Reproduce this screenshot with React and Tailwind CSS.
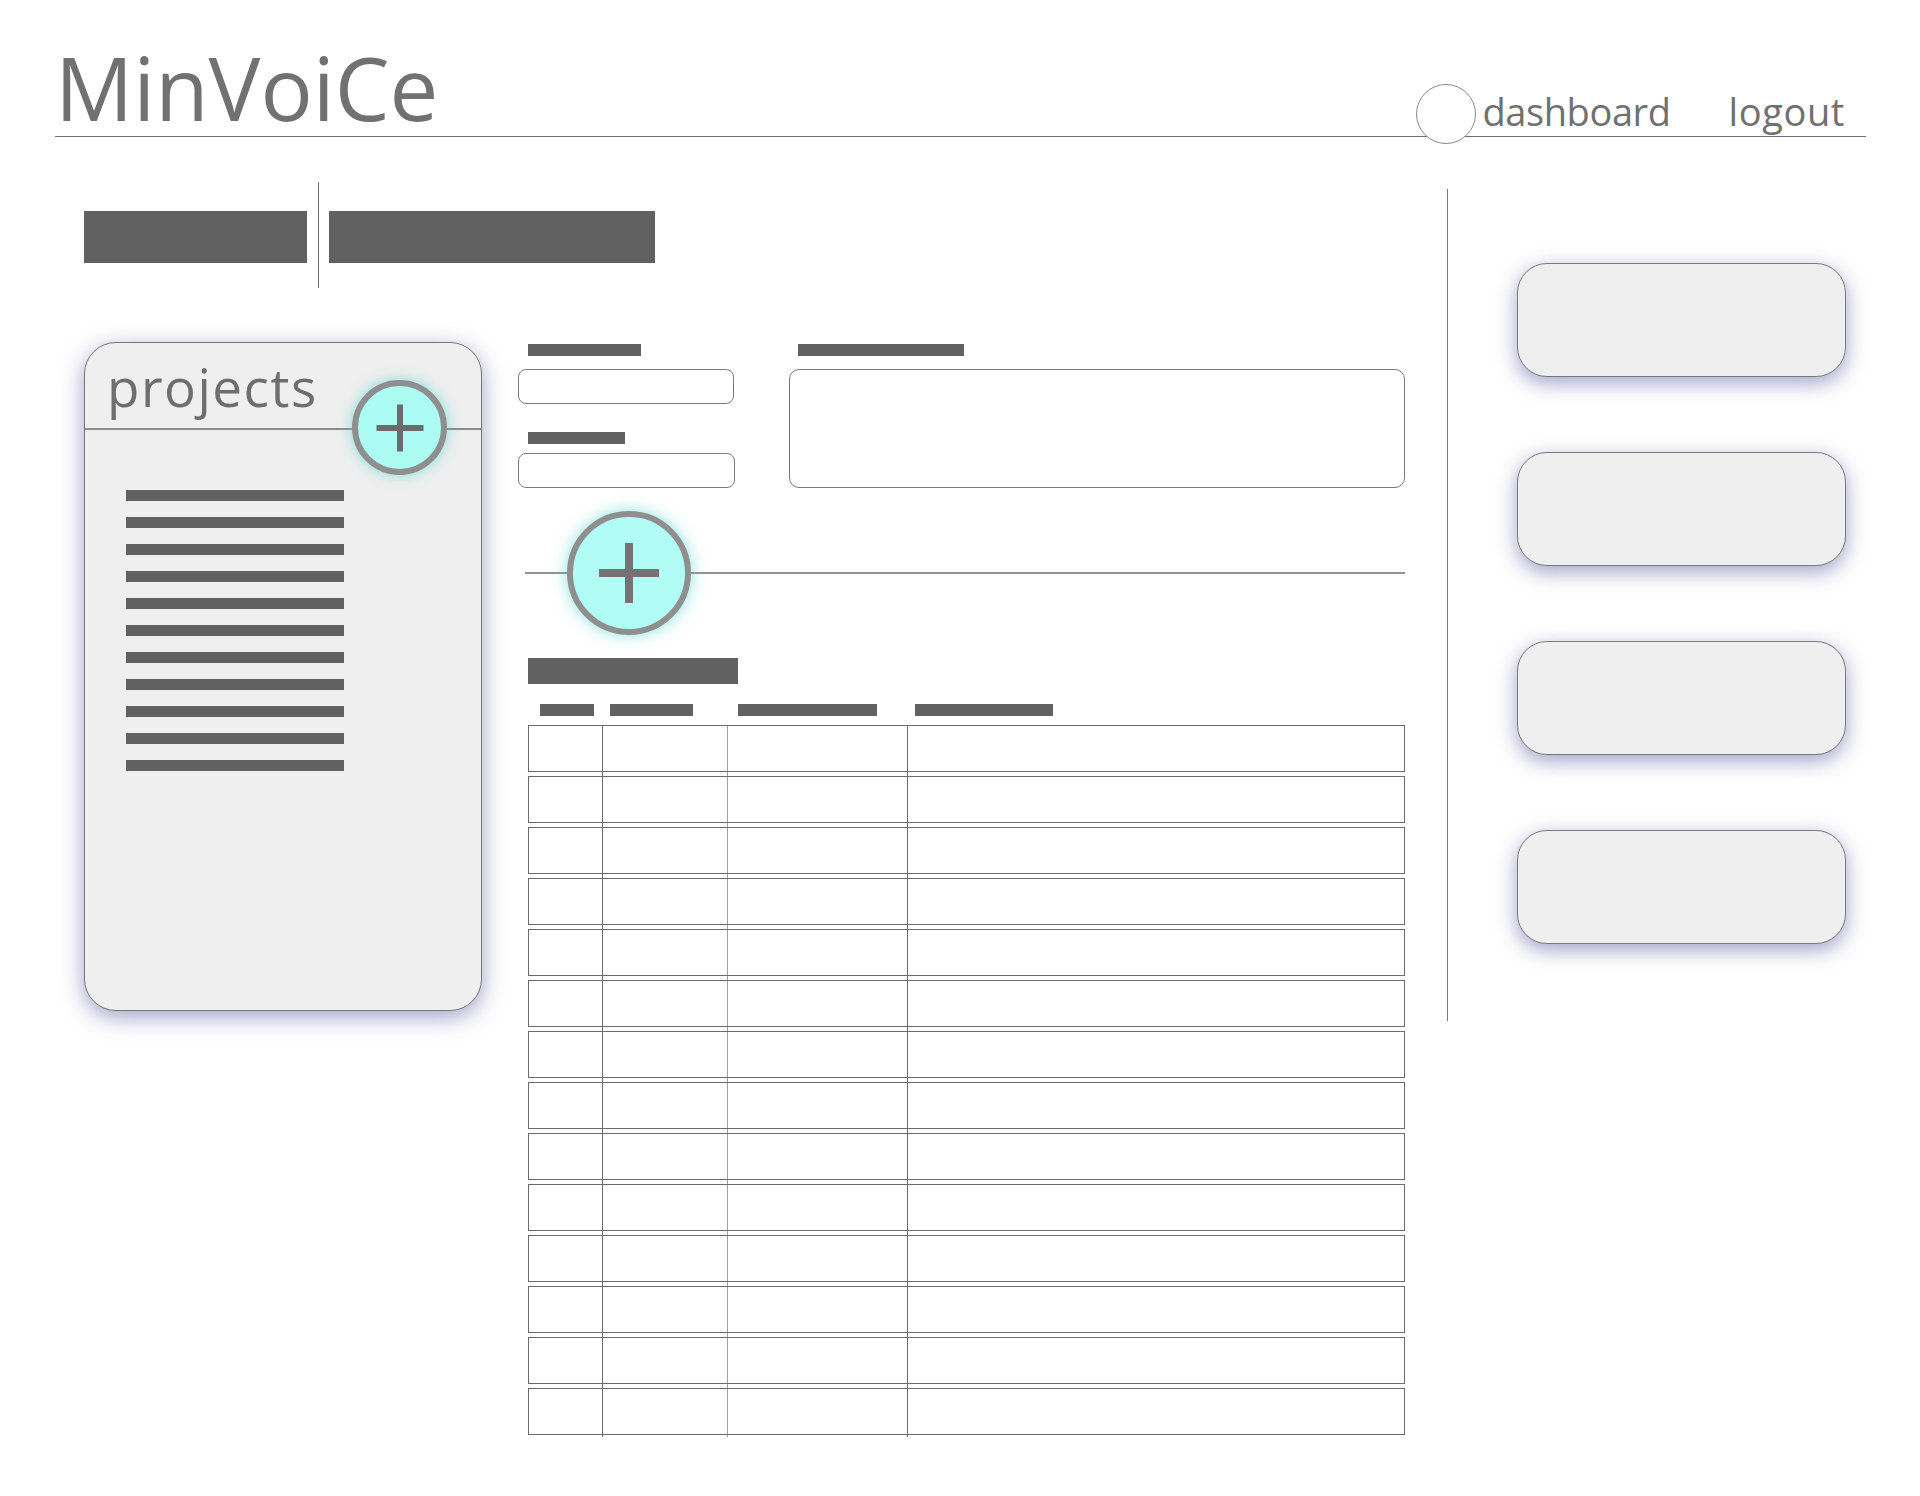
import React from "react";

const FONT = { fontFamily: '"Open Sans", "Noto Sans", "Liberation Sans", sans-serif' };

function Plus({ size, len, thick, color }) {
  const c = size / 2;
  return (
    <svg width={size} height={size} viewBox={`0 0 ${size} ${size}`}>
      <rect x={c - len / 2} y={c - thick / 2} width={len} height={thick} fill={color} />
      <rect x={c - thick / 2} y={c - len / 2} width={thick} height={len} fill={color} />
    </svg>
  );
}

function Card() {
  return (
    <div className="w-[329px] h-[114px] rounded-[30px] bg-[#efefef] border border-[#7a7a7a] shadow-[0_6px_20px_rgba(70,70,150,0.5)]" />
  );
}

function TableRow({ last }) {
  return (
    <div className="flex flex-col">
      <div className="h-[47px] border border-[#6b6b6b] grid grid-cols-[73px_125px_180px_1fr]">
        <div />
        <div className="border-l border-[#6b6b6b]" />
        <div className="border-l border-[#a0a0a0]" />
        <div className="border-l border-[#6b6b6b]" />
      </div>
      <div className={`${last ? "h-[2px]" : "h-[4px]"} border-x border-transparent grid grid-cols-[73px_125px_180px_1fr]`}>
        <div />
        <div className="border-l border-[#6b6b6b]" />
        <div className="border-l border-[#a0a0a0]" />
        <div className="border-l border-[#6b6b6b]" />
      </div>
    </div>
  );
}

export default function App() {
  const rows = Array.from({ length: 14 });
  const listBars = Array.from({ length: 11 });
  return (
    <div className="w-[1920px] h-[1496px] bg-white text-[#707070] overflow-hidden" style={FONT}>
      {/* Header */}
      <div className="ml-[55px] w-[1811px] h-[137px] border-b border-[#707070] flex items-end justify-between">
        <div className="text-[87px] leading-none mb-[5px] text-[#717171]">MinVoiCe</div>
        <div className="flex items-end pr-[21px]">
          <div className="w-[60px] h-[60px] rounded-full border border-[#8a8a8a] bg-white -mb-[8px] relative z-10" />
          <div className="ml-[6px] mb-[6px] text-[38px] leading-none tracking-[-0.4px]">dashboard</div>
          <div className="ml-[58px] mb-[6px] text-[38px] leading-none tracking-[0.6px]">logout</div>
        </div>
      </div>

      {/* Main */}
      <div className="flex">
        {/* Left block */}
        <div className="w-[1447px] shrink-0 pl-[84px]">
          {/* Tabs */}
          <div className="mt-[45px] flex items-start">
            <div className="mt-[29px] w-[223px] h-[52px] bg-[#616161]" />
            <div className="ml-[11px] w-px h-[106px] bg-[#6e6e6e]" />
            <div className="ml-[10px] mt-[29px] w-[326px] h-[52px] bg-[#616161]" />
          </div>

          {/* Body */}
          <div className="mt-[54px] flex items-start">
            {/* Projects card */}
            <div className="w-[398px] h-[669px] rounded-[32px] bg-[#efefef] border border-[#777] shadow-[0_6px_22px_rgba(70,70,150,0.5)]">
              <div className="relative h-[87px] border-b-2 border-[#8c8c8c] pl-[22px] pt-[17px]">
                <div className="text-[53px] leading-none tracking-[1.5px] text-[#6e6e6e]">projects</div>
                <div className="absolute right-[34px] top-[37px] w-[95px] h-[95px] rounded-full bg-[#adfcf3] border-[6px] border-[#8f8f8f] shadow-[0_0_14px_rgba(60,210,200,0.6)] flex items-center justify-center">
                  <Plus size={60} len={47} thick={6} color="#6b6b6b" />
                </div>
              </div>
              <div className="pl-[41px] mt-[60px] flex flex-col gap-[16px]">
                {listBars.map((_, i) => (
                  <div key={i} className="w-[218px] h-[11px] bg-[#616161]" />
                ))}
              </div>
            </div>

            {/* Form column */}
            <div className="ml-[36px] w-[887px] pt-[2px]">
              <div className="flex items-start">
                <div className="w-[217px] flex flex-col">
                  <div className="ml-[10px] w-[113px] h-[12px] bg-[#616161]" />
                  <div className="mt-[13px] w-[216px] h-[35px] rounded-[8px] border border-[#7a7a7a]" />
                  <div className="mt-[28px] ml-[10px] w-[97px] h-[12px] bg-[#616161]" />
                  <div className="mt-[9px] w-[217px] h-[35px] rounded-[8px] border border-[#7a7a7a]" />
                </div>
                <div className="ml-[54px] w-[616px] flex flex-col">
                  <div className="ml-[9px] w-[166px] h-[12px] bg-[#616161]" />
                  <div className="mt-[13px] w-[616px] h-[119px] rounded-[10px] border border-[#7a7a7a]" />
                </div>
              </div>

              {/* Divider with plus */}
              <div className="mt-[22px] h-[125px] flex items-center">
                <div className="ml-[7px] w-[42px] h-[2px] bg-[#929292]" />
                <div className="w-[124px] h-[124px] shrink-0 rounded-full bg-[#b1fdf5] border-[6px] border-[#8f8f8f] shadow-[0_0_16px_rgba(60,210,200,0.6)] flex items-center justify-center">
                  <Plus size={70} len={60} thick={8} color="#737373" />
                </div>
                <div className="flex-1 h-[2px] bg-[#929292]" />
              </div>

              {/* Section title */}
              <div className="mt-[23px] ml-[10px] w-[210px] h-[26px] bg-[#616161]" />

              {/* Column headers */}
              <div className="mt-[20px] flex">
                <div className="ml-[22px] w-[54px] h-[12px] bg-[#616161]" />
                <div className="ml-[16px] w-[83px] h-[12px] bg-[#616161]" />
                <div className="ml-[45px] w-[139px] h-[12px] bg-[#616161]" />
                <div className="ml-[38px] w-[138px] h-[12px] bg-[#616161]" />
              </div>

              {/* Table */}
              <div className="mt-[9px] ml-[10px] w-[877px] flex flex-col">
                {rows.map((_, i) => (
                  <TableRow key={i} last={i === rows.length - 1} />
                ))}
              </div>
            </div>
          </div>
        </div>

        {/* Right divider */}
        <div className="mt-[52px] w-px h-[832px] bg-[#7a7a7a] shrink-0" />

        {/* Right cards */}
        <div className="ml-[69px] mt-[126px] flex flex-col gap-[75px]">
          <Card />
          <Card />
          <Card />
          <Card />
        </div>
      </div>
    </div>
  );
}
